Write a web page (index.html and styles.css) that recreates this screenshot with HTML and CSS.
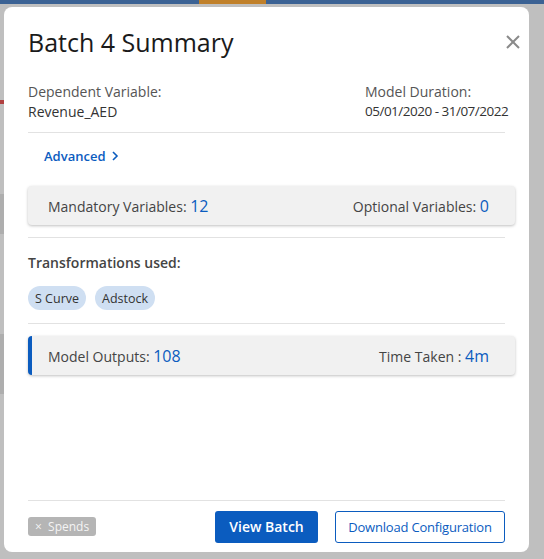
FILE: index.html
```html
<!DOCTYPE html>
<html lang="en">
<head>
    <meta charset="UTF-8">
    <title>Batch 4 Summary</title>
    <link rel="stylesheet" href="styles.css">
</head>
<body>
    <div class="topbar"><span class="topbar-active"></span></div>
    <div class="backdrop">
        <div class="page-hint">
            <span class="hint hint-red"></span>
            <span class="hint hint-band"></span>
            <span class="hint hint-band second"></span>
        </div>

        <div class="modal">
            <div class="modal-header">
                <h2>Batch 4 Summary</h2>
                <button class="close-btn" aria-label="Close">
                    <svg width="16" height="16" viewBox="0 0 16 16">
                        <path d="M2 2 L14 14 M14 2 L2 14" stroke="#8a8a8a" stroke-width="2" fill="none"/>
                    </svg>
                </button>
            </div>

            <div class="info-row">
                <div>
                    <p class="label">Dependent Variable:</p>
                    <p class="value">Revenue_AED</p>
                </div>
                <div class="info-right">
                    <p class="label">Model Duration:</p>
                    <p class="value dates">05/01/2020 - 31/07/2022</p>
                </div>
            </div>

            <hr class="divider tight">

            <a href="#" class="advanced-link">Advanced
                <svg width="8" height="10" viewBox="0 0 8 10">
                    <path d="M2 1 L6 5 L2 9" stroke="#0b5cbf" stroke-width="1.6" fill="none"/>
                </svg>
            </a>

            <div class="stat-card">
                <span>Mandatory Variables: <b class="num">12</b></span>
                <span>Optional Variables: <b class="num">0</b></span>
            </div>

            <hr class="divider">

            <p class="section-title">Transformations used:</p>
            <div class="chips">
                <span class="chip">S Curve</span>
                <span class="chip">Adstock</span>
            </div>

            <hr class="divider loose">

            <div class="stat-card accent">
                <span>Model Outputs: <b class="num">108</b></span>
                <span>Time Taken : <b class="num">4m</b></span>
            </div>

            <div class="spacer"></div>

            <hr class="divider">

            <div class="modal-footer">
                <span class="tag">&times;&nbsp; Spends</span>
                <div class="actions">
                    <button class="btn btn-primary">View Batch</button>
                    <button class="btn btn-outline">Download Configuration</button>
                </div>
            </div>
        </div>
    </div>
</body>
</html>
```

FILE: styles.css
```css
* {
    box-sizing: border-box;
}
body {
    margin: 0;
    font-family: "Open Sans", "Noto Sans", sans-serif;
    background: #a8a8a8;
    width: 544px;
    height: 559px;
    overflow: hidden;
}
.topbar {
    height: 4px;
    background: #3b6294;
    position: relative;
}
.topbar-active {
    position: absolute;
    left: 199px;
    top: 0;
    width: 67px;
    height: 4px;
    background: #c0802a;
}
.backdrop {
    position: relative;
    height: 555px;
    background: #bfbfbf;
    padding: 3px 15px 0 4px;
}
.page-hint {
    position: absolute;
    left: 0;
    top: 0;
    width: 4px;
    height: 555px;
}
.hint {
    position: absolute;
    left: 0;
    width: 4px;
}
.hint-red {
    top: 96px;
    height: 4px;
    background: #b04040;
}
.hint-band {
    top: 190px;
    height: 40px;
    background: #aeaeae;
}
.hint-band.second {
    top: 330px;
    height: 60px;
}
.modal {
    width: 525px;
    height: 545px;
    background: #fff;
    border-radius: 8px;
    padding: 0 24px 0 24px;
    display: flex;
    flex-direction: column;
}
.modal-header {
    display: flex;
    justify-content: space-between;
    align-items: center;
    height: 70px;
}
.modal-header h2 {
    margin: 0;
    font-size: 25px;
    font-weight: 400;
    color: #1a1a1a;
}
.close-btn {
    border: none;
    background: none;
    padding: 0;
    margin-right: -16px;
    width: 16px;
    height: 16px;
    cursor: pointer;
}
.info-row {
    display: flex;
    justify-content: space-between;
    padding-top: 5px;
}
.info-right {
    width: 140px;
}
.label {
    margin: 0 0 1px;
    font-size: 14px;
    color: #555;
}
.value {
    margin: 0;
    font-size: 14px;
    color: #333;
}
.value.dates {
    font-size: 13.5px;
    letter-spacing: -0.5px;
    white-space: nowrap;
}
.divider {
    border: none;
    border-top: 1px solid #e2e2e2;
    margin: 12px 0 0;
}
.divider.tight {
    margin-top: 11px;
}
.divider.loose {
    margin-top: 13px;
}
.advanced-link {
    display: inline-flex;
    align-items: center;
    gap: 6px;
    margin: 14px 0 0 16px;
    font-size: 13px;
    font-weight: 600;
    color: #0b5cbf;
    text-decoration: none;
}
.stat-card {
    display: flex;
    justify-content: space-between;
    align-items: center;
    height: 39px;
    margin: 21px -10px 0 0;
    padding: 0 26px 0 20px;
    background: #f1f1f1;
    border-radius: 4px;
    box-shadow: 0 1px 3px rgba(0,0,0,0.25);
    font-size: 14px;
    color: #444;
}
.stat-card.accent {
    border-left: 4px solid #0b5cbf;
    padding-left: 16px;
    margin-top: 12px;
}
.num {
    font-weight: 400;
    font-size: 16px;
    color: #0b5cbf;
}
.section-title {
    margin: 15px 0 0;
    font-size: 14px;
    font-weight: 600;
    color: #444;
}
.chips {
    display: flex;
    gap: 9px;
    margin-top: 14px;
}
.chip {
    display: inline-flex;
    align-items: center;
    height: 24px;
    background: #cfdff2;
    border-radius: 12px;
    padding: 0 7px;
    font-size: 12.5px;
    color: #333;
}
.spacer {
    flex: 1;
}
.modal-footer {
    display: flex;
    justify-content: space-between;
    align-items: center;
    height: 51px;
}
.tag {
    background: #b5b5b5;
    color: #f4f4f4;
    font-size: 12px;
    padding: 1px 7px;
    border-radius: 3px;
}
.actions {
    display: flex;
    gap: 17px;
}
.btn {
    height: 32px;
    font-family: inherit;
    font-size: 14px;
    border-radius: 3px;
    white-space: nowrap;
    padding: 0;
    cursor: pointer;
}
.btn-primary {
    width: 103px;
    background: #0b5cbf;
    color: #fff;
    border: none;
    font-weight: 600;
}
.btn-outline {
    width: 170px;
    background: #fff;
    color: #0b5cbf;
    border: 1px solid #0b5cbf;
    font-size: 13px;
    letter-spacing: -0.2px;
}
```
